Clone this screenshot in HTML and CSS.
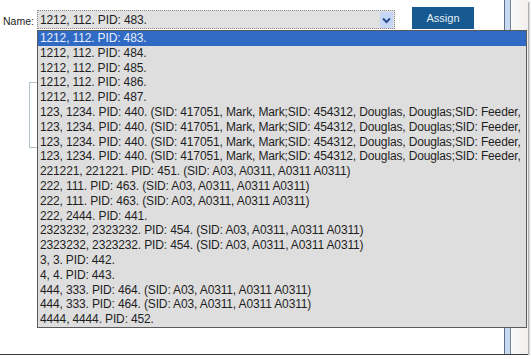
FILE: index.html
```html
<!DOCTYPE html>
<html lang="en">
<head>
  <meta charset="UTF-8">
  <meta name="viewport" content="width=device-width, initial-scale=1.0">
  <title>Assign</title>
  <link rel="stylesheet" href="styles.css">
</head>
<body>
  <div class="shot">
    <div class="main">
      <div class="toolbar">
        <span class="lbl">Name:</span>
        <div class="select">
          <span class="value">1212, 112. PID: 483.</span>
          <span class="arrow">
            <svg width="13" height="16" viewBox="0 0 13 16"><path d="M3 6.5 L6.5 10 L10 6.5" fill="none" stroke="#2b4d8c" stroke-width="2"/></svg>
          </span>
        </div>
        <button class="assign">Assign</button>
      </div>
      <div class="box"></div>
    </div>
    <div class="edge"></div>
    <div class="gutter"></div>

    <ul class="options">
      <li class="sel">1212, 112. PID: 483.</li>
      <li>1212, 112. PID: 484.</li>
      <li>1212, 112. PID: 485.</li>
      <li>1212, 112. PID: 486.</li>
      <li>1212, 112. PID: 487.</li>
      <li>123, 1234. PID: 440. (SID: 417051, Mark, Mark;SID: 454312, Douglas, Douglas;SID: Feeder,</li>
      <li>123, 1234. PID: 440. (SID: 417051, Mark, Mark;SID: 454312, Douglas, Douglas;SID: Feeder,</li>
      <li>123, 1234. PID: 440. (SID: 417051, Mark, Mark;SID: 454312, Douglas, Douglas;SID: Feeder,</li>
      <li>123, 1234. PID: 440. (SID: 417051, Mark, Mark;SID: 454312, Douglas, Douglas;SID: Feeder,</li>
      <li>221221, 221221. PID: 451. (SID: A03, A0311, A0311 A0311)</li>
      <li>222, 111. PID: 463. (SID: A03, A0311, A0311 A0311)</li>
      <li>222, 111. PID: 463. (SID: A03, A0311, A0311 A0311)</li>
      <li>222, 2444. PID: 441.</li>
      <li>2323232, 2323232. PID: 454. (SID: A03, A0311, A0311 A0311)</li>
      <li>2323232, 2323232. PID: 454. (SID: A03, A0311, A0311 A0311)</li>
      <li>3, 3. PID: 442.</li>
      <li>4, 4. PID: 443.</li>
      <li>444, 333. PID: 464. (SID: A03, A0311, A0311 A0311)</li>
      <li>444, 333. PID: 464. (SID: A03, A0311, A0311 A0311)</li>
      <li>4444, 4444. PID: 452.</li>
    </ul>
  </div>
</body>
</html>
```

FILE: styles.css
```css
body {
  margin: 0;
  background: #fff;
  overflow: hidden;
  font-family: "Liberation Sans", Arial, sans-serif;
  color: #1e1e1e;
}

.shot {
  position: relative;
  display: flex;
  width: 528px;
  height: 354px;
  border-bottom: 1px solid #3c3c3c;
  box-shadow: 1px 2px 2px #8a8a8a;
}

.main {
  width: 504px;
  border-right: 1px solid #5f7189;
}

.edge {
  width: 5px;
  background: #c8daf0;
  border-right: 1px solid #74859c;
}

.gutter {
  flex: 1;
  background: linear-gradient(to right, #fafafa, #f1efed);
}

.toolbar {
  display: flex;
  align-items: flex-start;
  padding-top: 7px;
}

.lbl {
  width: 34px;
  margin-left: 3px;
  margin-top: 8px;
  font-size: 10.5px;
  color: #222;
}

.select {
  display: flex;
  align-items: center;
  justify-content: space-between;
  width: 356px;
  height: 17px;
  margin-top: 3px;
  border: 1px dotted #8a8a8a;
  background: #e1e1e1;
}

.value {
  padding-left: 2px;
  font-size: 12px;
  letter-spacing: -0.12px;
}

.arrow {
  display: flex;
  width: 13px;
  height: 16px;
  margin-right: 1px;
  background: #c6d6f6;
}

.assign {
  width: 62px;
  height: 22px;
  margin-left: 17px;
  border: none;
  background: #175a91;
  color: #e6edf5;
  font-family: "Liberation Sans", Arial, sans-serif;
  font-size: 11px;
  padding: 0;
}

.box {
  width: 200px;
  height: 64px;
  margin-top: 53px;
  margin-left: 29px;
  border: 1px solid #b3c5cd;
}

.options {
  position: absolute;
  top: 30px;
  left: 37px;
  width: 488px;
  margin: 0;
  padding: 0;
  list-style: none;
  background: #dedede;
  border: 1px solid #5a5a5a;
  overflow: hidden;
}

.options li {
  height: 14.8px;
  line-height: 14.8px;
  padding-left: 2px;
  font-size: 12px;
  letter-spacing: -0.14px;
  white-space: nowrap;
}

.options .sel {
  background: #316ac5;
  color: #e8eefa;
}
```
